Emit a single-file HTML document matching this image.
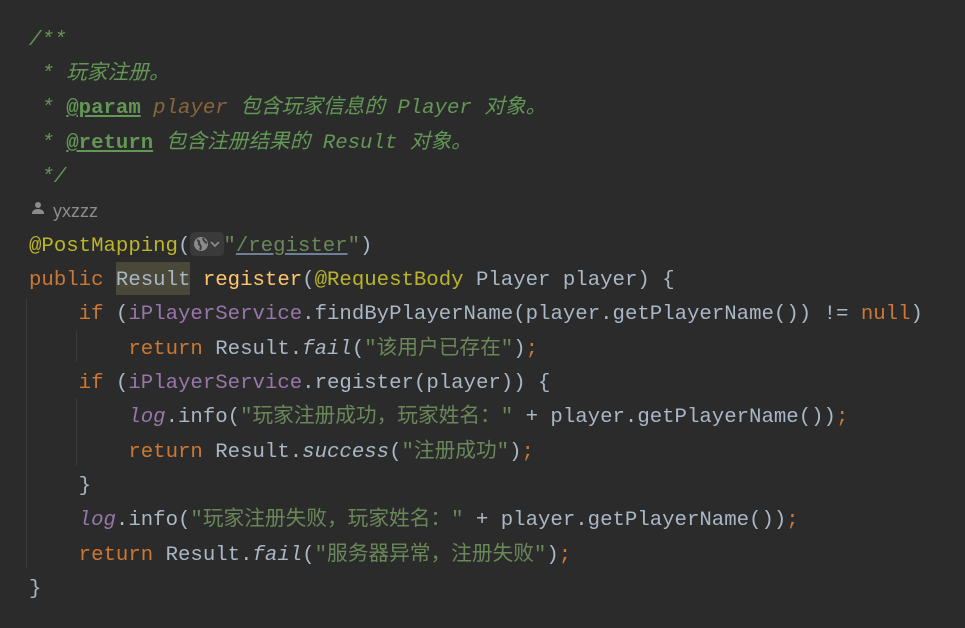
<!DOCTYPE html>
<html><head><meta charset="utf-8"><style>
html,body{margin:0;padding:0;background:#2b2b2b;width:965px;height:628px;overflow:hidden}
.l{position:absolute;left:29px;height:34px;line-height:34px;white-space:pre;font-family:"Liberation Mono","Noto Sans CJK SC",monospace;font-size:20.7px;color:#a9b7c6}
.cm{color:#629755;font-style:italic}
.tg{color:#629755;font-weight:bold;text-decoration:underline;font-style:normal}
.pa{color:#8a653b;font-style:italic}
.k{color:#cc7832}
.m{color:#ffc66d}
.s{color:#6a8759}
.an{color:#bbb529}
.f{color:#9876aa}
.i{font-style:italic}
.g{position:absolute;width:1px;background:#3b3b3b}
</style></head><body>
<div class="g" style="left:26px;top:298px;height:270px"></div>
<div class="g" style="left:76px;top:331px;height:31px"></div>
<div class="g" style="left:76px;top:398px;height:68px"></div>

<div class="l cm" style="top:24px">/**</div>
<div class="l cm" style="top:58px"> * 玩家注册。</div>
<div class="l cm" style="top:92px"> * <span class="tg">@param</span> <span class="pa">player</span> 包含玩家信息的 Player 对象。</div>
<div class="l cm" style="top:127px"> * <span class="tg">@return</span> 包含注册结果的 Result 对象。</div>
<div class="l cm" style="top:161px"> */</div>
<div style="position:absolute;left:31px;top:201px;width:14px;height:14px">
<svg width="14" height="14" viewBox="0 0 14 14"><circle cx="7" cy="4" r="3" fill="#8c8c8c"/><path d="M1 13 Q1 8 7 8 Q13 8 13 13 Z" fill="#8c8c8c"/></svg></div>
<div style="position:absolute;left:53px;top:199px;font-family:'Liberation Sans',sans-serif;font-size:18px;color:#8c8c8c;line-height:24px">yxzzz</div>
<div class="l" style="top:230px"><span class="an">@PostMapping</span>(<span style="display:inline-block;width:33px"></span><span class="s">"<span style="text-decoration:underline;text-decoration-color:#6d7f99">/register</span>"</span>)</div>
<div style="position:absolute;left:190px;top:232px;width:34px;height:24px;background:#3a3a3a;border-radius:5px">
<svg width="34" height="24" viewBox="0 0 34 24"><circle cx="11" cy="12" r="7" fill="#8a8a8a"/><path d="M7 8 Q10 9 9 12 Q12 14 10 18 M13 6 Q14 10 17 11" stroke="#3a3a3a" stroke-width="2" fill="none"/><path d="M21 10 L25 14 L29 10" stroke="#8a8a8a" stroke-width="1.8" fill="none"/></svg></div>
<div style="position:absolute;left:116px;top:262px;width:74px;height:33px;background:#4a4838"></div>
<div class="l" style="top:264px"><span class="k">public</span> Result <span class="m">register</span>(<span class="an">@RequestBody</span> Player player) {</div>
<div class="l" style="top:298px">    <span class="k">if</span> (<span class="f">iPlayerService</span>.findByPlayerName(player.getPlayerName()) != <span class="k">null</span>)</div>
<div class="l" style="top:333px">        <span class="k">return</span> Result.<span class="i">fail</span>(<span class="s">"该用户已存在"</span>)<span class="k">;</span></div>
<div class="l" style="top:367px">    <span class="k">if</span> (<span class="f">iPlayerService</span>.register(player)) {</div>
<div class="l" style="top:401px">        <span class="f i">log</span>.info(<span class="s">"玩家注册成功，玩家姓名："</span> + player.getPlayerName())<span class="k">;</span></div>
<div class="l" style="top:436px">        <span class="k">return</span> Result.<span class="i">success</span>(<span class="s">"注册成功"</span>)<span class="k">;</span></div>
<div class="l" style="top:470px">    }</div>
<div class="l" style="top:504px">    <span class="f i">log</span>.info(<span class="s">"玩家注册失败，玩家姓名："</span> + player.getPlayerName())<span class="k">;</span></div>
<div class="l" style="top:539px">    <span class="k">return</span> Result.<span class="i">fail</span>(<span class="s">"服务器异常，注册失败"</span>)<span class="k">;</span></div>
<div class="l" style="top:573px">}</div>
</body></html>
